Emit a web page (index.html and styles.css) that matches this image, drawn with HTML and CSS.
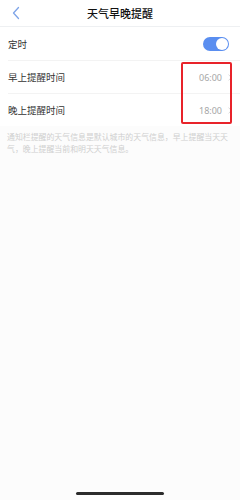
FILE: index.html
```html
<!DOCTYPE html>
<html lang="zh">
<head>
    <meta charset="UTF-8">
    <meta name="viewport" content="width=device-width, initial-scale=1.0">
    <title>天气早晚提醒</title>
    <link rel="stylesheet" href="styles.css">
</head>
<body>
    <div class="page">
        <div class="header">
            <svg class="back" width="10" height="14" viewBox="0 0 10 14">
                <path d="M7.5 1.5 L2.5 7 L7.5 12.5" fill="none" stroke="#7ea4e8" stroke-width="1.3" stroke-linecap="round" stroke-linejoin="round"/>
            </svg>
            <h1>天气早晚提醒</h1>
        </div>

        <div class="list">
            <div class="row">
                <span class="label">定时</span>
                <span class="switch"><span class="knob"></span></span>
            </div>
            <div class="row">
                <span class="label">早上提醒时间</span>
                <span class="value">06:00
                    <svg class="arrow" width="4" height="7" viewBox="0 0 4 7"><path d="M0.6 0.6 L3.3 3.5 L0.6 6.4" fill="none" stroke="#d6d6d6" stroke-width="0.9"/></svg>
                </span>
            </div>
            <div class="row">
                <span class="label">晚上提醒时间</span>
                <span class="value">18:00
                    <svg class="arrow" width="4" height="7" viewBox="0 0 4 7"><path d="M0.6 0.6 L3.3 3.5 L0.6 6.4" fill="none" stroke="#d6d6d6" stroke-width="0.9"/></svg>
                </span>
            </div>
        </div>

        <p class="note">通知栏提醒的天气信息是默认城市的天气信息，早上提醒当天天气，晚上提醒当前和明天天气信息。</p>

        <!-- annotation box over the time values -->
        <div class="mark"></div>

        <div class="home-bar"></div>
    </div>
</body>
</html>
```

FILE: styles.css
```css
body {
    margin: 0;
    padding: 0;
    background-color: #fff;
    font-family: "Noto Sans CJK SC", "Noto Sans", sans-serif;
    color: #222;
}

.page {
    position: relative;
    width: 240px;
    height: 500px;
    background-color: #fcfcfc;
    overflow: hidden;
}

.header {
    height: 26px;
    background-color: #fff;
    border-bottom: 1px solid #eef0f2;
    display: flex;
    align-items: center;
    justify-content: center;
    position: relative;
}

.back {
    position: absolute;
    left: 11px;
    top: 6px;
}

h1 {
    margin: 0;
    font-size: 11px;
    font-weight: 500;
    color: #111;
}

.list {
    background-color: #fff;
}

.row {
    height: 32px;
    margin-left: 8px;
    padding-right: 8px;
    display: flex;
    align-items: center;
    justify-content: space-between;
    border-bottom: 1px solid #f3f3f3;
}

.row:first-child {
    height: 33px;
}

.row:last-child {
    border-bottom: none;
}

.label {
    font-size: 9.5px;
    color: #333;
}

.value {
    font-family: "Noto Sans", "Liberation Sans", sans-serif;
    font-size: 9px;
    font-weight: 400;
    color: #a6a6a6;
    display: flex;
    align-items: center;
}

.arrow {
    margin-left: 6px;
}

.switch {
    width: 26px;
    height: 14px;
    border-radius: 7px;
    background-color: #5a8ef0;
    position: relative;
    margin-right: 3px;
}

.knob {
    position: absolute;
    right: 1px;
    top: 1px;
    width: 12px;
    height: 12px;
    border-radius: 50%;
    background-color: #fff;
}

.note {
    margin: 0;
    padding: 5px 8px 0 7px;
    font-size: 7.9px;
    line-height: 12px;
    color: #cfcfcf;
}

.mark {
    position: absolute;
    left: 181px;
    top: 62px;
    width: 47px;
    height: 58px;
    border: 2px solid #e8232a;
    border-radius: 2px;
}

.home-bar {
    position: absolute;
    left: 76px;
    bottom: 5px;
    width: 88px;
    height: 3px;
    border-radius: 2px;
    background-color: #2b2b2b;
}
```
